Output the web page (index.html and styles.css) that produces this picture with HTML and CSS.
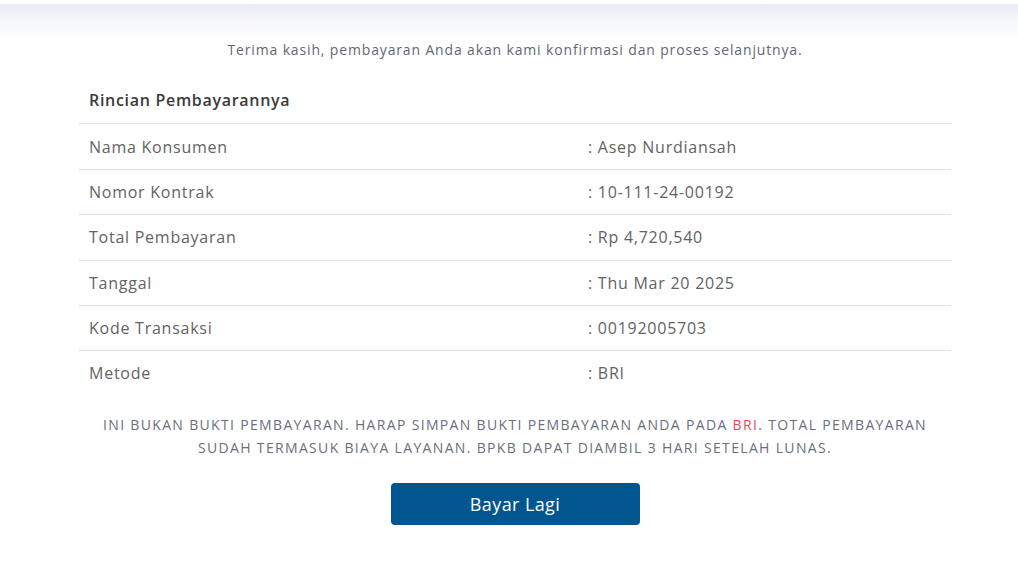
FILE: index.html
```html
<!DOCTYPE html>
<html lang="id">
<head>
<meta charset="utf-8">
<title>Pembayaran</title>
<link rel="stylesheet" href="styles.css">
</head>
<body>
<div class="page">
  <div class="wrap">
    <p class="thanks">Terima kasih, pembayaran Anda akan kami konfirmasi dan proses selanjutnya.</p>
    <div class="details">
      <div class="row head"><div class="cell">Rincian Pembayarannya</div></div>
      <div class="row"><div class="cell label">Nama Konsumen</div><div class="cell value">: Asep Nurdiansah</div></div>
      <div class="row"><div class="cell label">Nomor Kontrak</div><div class="cell value">: 10-111-24-00192</div></div>
      <div class="row"><div class="cell label">Total Pembayaran</div><div class="cell value">: Rp 4,720,540</div></div>
      <div class="row"><div class="cell label">Tanggal</div><div class="cell value">: Thu Mar 20 2025</div></div>
      <div class="row"><div class="cell label">Kode Transaksi</div><div class="cell value">: 00192005703</div></div>
      <div class="row"><div class="cell label">Metode</div><div class="cell value">: BRI</div></div>
    </div>
    <p class="note">INI BUKAN BUKTI PEMBAYARAN. HARAP SIMPAN BUKTI PEMBAYARAN ANDA PADA <span class="bank">BRI</span>. TOTAL PEMBAYARAN SUDAH TERMASUK BIAYA LAYANAN. BPKB DAPAT DIAMBIL 3 HARI SETELAH LUNAS.</p>
    <div class="actions"><button class="btn" type="button">Bayar Lagi</button></div>
  </div>
</div>
</body>
</html>
```
FILE: styles.css
```css
html, body {
  margin: 0;
  padding: 0;
  background: #fff;
}
body {
  font-family: "Open Sans", "Noto Sans", sans-serif;
  color: #555;
}
.page {
  min-height: 563px;
  background: linear-gradient(to bottom, #fff 0, #fff 4px, #e8eaf4 4px, #f6f7fb 20px, #fff 42px);
  padding-top: 39px;
  box-sizing: border-box;
}
.wrap {
  margin-left: 79px;
  width: 872px;
}
.thanks {
  margin: 0;
  text-align: center;
  font-size: 14px;
  line-height: 21px;
  letter-spacing: 0.85px;
  color: #646773;
}
.details {
  margin-top: 18px;
}
.row {
  display: flex;
  border-top: 1px solid #dbe0e6;
  font-size: 16px;
  line-height: 24px;
  letter-spacing: 0.75px;
}
.row.head {
  border-top: none;
}
.cell {
  padding: 10.2px 10px;
}
.head .cell {
  font-weight: 600;
  color: #3a3a3a;
  font-size: 16px;
  letter-spacing: 0.7px;
  padding-bottom: 11.2px;
}
.label {
  width: 479px;
  color: #636363;
}
.value {
  flex: 1;
  color: #636363;
}
.note {
  margin: 17px 0 0;
  text-align: center;
  font-size: 14px;
  line-height: 23px;
  letter-spacing: 1.33px;
  color: #6a6f7c;
  padding: 0 12px;
}
.bank {
  color: #f5435b;
}
.actions {
  display: flex;
  justify-content: center;
  margin-top: 24px;
}
.btn {
  width: 249px;
  height: 42px;
  border: none;
  border-radius: 4px;
  background: #02568f;
  color: #fff;
  font-family: inherit;
  font-size: 18px;
  letter-spacing: 0.4px;
  cursor: pointer;
}
```
